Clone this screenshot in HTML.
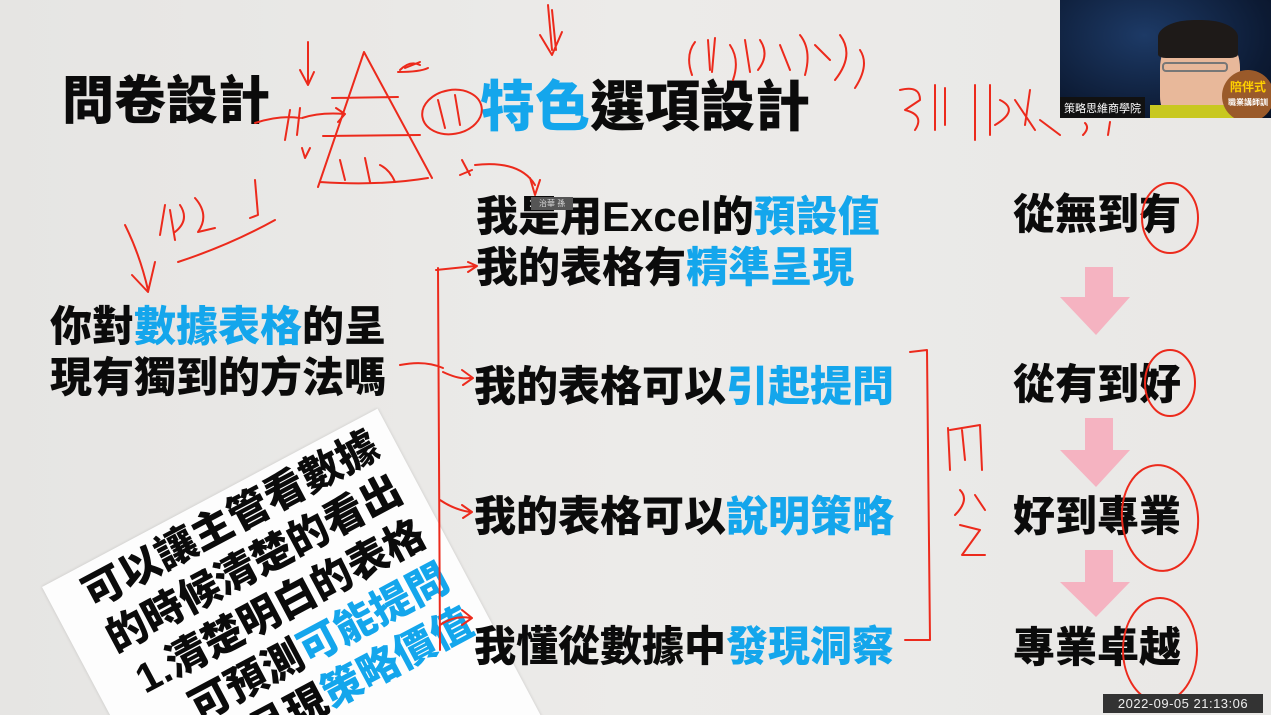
<!DOCTYPE html>
<html><head><meta charset="utf-8"><style>
html,body{margin:0;padding:0;width:1271px;height:715px;overflow:hidden}
body{position:relative;background:linear-gradient(90deg,#e6e5e3,#ecebe9 50%,#e9e8e6);font-family:"Liberation Sans","Noto Sans CJK TC",sans-serif;font-weight:bold}
.t{position:absolute;white-space:nowrap;color:#0b0b0b;font-weight:900;line-height:1;z-index:3}
.b{color:#14a6ec}
.card{position:absolute;left:42px;top:587px;width:380px;height:400px;background:#fdfdfd;transform:rotate(-28deg);transform-origin:0 0;box-shadow:0 0 3px rgba(0,0,0,.15);z-index:2}
.card div{font-size:41px;line-height:50px;font-weight:900;color:#0b0b0b;text-align:right;width:362px;white-space:nowrap}
.cam{position:absolute;left:1060px;top:0;width:211px;height:118px;background:radial-gradient(ellipse at 40% 30%,#1d3a66,#0c1a33 70%,#081225);overflow:hidden;z-index:5}
svg{z-index:4}
</style></head><body>
<div class="t" style="left:62px;top:76px;font-size:52px">問卷設計</div>
<div class="t" style="left:480px;top:80px;font-size:55px"><span class="b">特色</span>選項設計</div>
<div class="t" style="left:50px;top:306px;font-size:42px">你對<span class="b">數據表格</span>的呈</div>
<div class="t" style="left:50px;top:357px;font-size:42px">現有獨到的方法嗎</div>
<div class="t" style="left:476px;top:196px;font-size:42px">我是用Excel的<span class="b">預設值</span></div>
<div class="t" style="left:476px;top:247px;font-size:42px">我的表格有<span class="b">精準呈現</span></div>
<div class="t" style="left:474px;top:366px;font-size:42px">我的表格可以<span class="b">引起提問</span></div>
<div class="t" style="left:474px;top:496px;font-size:42px">我的表格可以<span class="b">說明策略</span></div>
<div class="t" style="left:474px;top:626px;font-size:42px">我懂從數據中<span class="b">發現洞察</span></div>
<div class="t" style="left:1013px;top:194px;font-size:42px">從無到有</div>
<div class="t" style="left:1013px;top:364px;font-size:42px">從有到好</div>
<div class="t" style="left:1013px;top:496px;font-size:42px">好到專業</div>
<div class="t" style="left:1013px;top:627px;font-size:42px">專業卓越</div>
<svg style="position:absolute;left:0;top:0" width="1271" height="715">
<g fill="#f5b3c1">
<polygon points="1085,267 1113,267 1113,297 1130,297 1096,335 1060,297 1085,297"/>
<polygon points="1085,418 1113,418 1113,450 1130,450 1096,487 1060,450 1085,450"/>
<polygon points="1085,550 1113,550 1113,582 1130,582 1096,617 1060,582 1085,582"/>
</g>
</svg>
<div class="card">
<div style="margin-top:4px">可以讓主管看數據</div>
<div>的時候清楚的看出</div>
<div>1.清楚明白的表格</div>
<div>可預測<span class="b">可能提問</span></div>
<div>呈現<span class="b">策略價值</span></div>
</div>
<svg style="position:absolute;left:0;top:0" width="1271" height="715" fill="none" stroke="#ec2a1c" stroke-width="2" stroke-linecap="round" stroke-linejoin="round">
<path d="M364,52 L318,187 M364,52 L432,178 M332,98 L398,97 M323,136 L420,135 M320,182 Q380,186 428,178"/>
<path d="M308,42 L308,85 M300,70 L308,85 L314,72 M302,148 L305,158 L310,148"/>
<path d="M255,123 Q280,115 300,118 M290,110 L285,140 M300,108 L297,135 M302,118 Q320,112 345,114 L336,108 M345,114 L338,122"/>
<path d="M400,70 Q410,60 420,65 M405,68 L420,62 M398,72 Q420,72 428,68"/>
<ellipse cx="452" cy="112" rx="30" ry="22" transform="rotate(-10 452 112)"/>
<path d="M438,100 L445,128 M455,95 L460,125 M340,160 L345,180 M365,158 L370,182 M380,165 Q390,170 395,182 M462,160 L470,175 M472,170 L460,175"/>
<path d="M475,165 Q520,160 535,185 M530,178 L535,195 L540,180"/>
<path d="M548,5 L552,50 M540,35 L552,55 L562,32 M552,10 L556,50"/>
<path d="M695,42 Q685,55 692,75 M708,40 L710,70 M715,38 L712,72 M730,45 Q740,60 733,80 M745,40 L750,72 M760,40 Q770,55 758,70 M780,45 L790,70 M800,35 Q812,50 805,75 M815,45 L830,60 M840,35 Q855,55 835,80 M860,50 Q870,65 855,88"/>
<path d="M900,90 Q920,85 920,100 L905,110 Q925,115 915,130 M935,85 L935,130 M945,88 L945,125 M975,85 L975,140 M990,85 L990,135 M1000,100 Q1020,110 995,125 M1015,100 L1035,130 M1030,90 L1025,125 M1040,120 L1060,135"/>
<path d="M1085,123 Q1090,128 1083,135 M1110,122 L1108,135"/>
<path d="M165,205 L160,235 M170,210 L175,240 M180,205 Q190,220 175,232 M195,198 Q210,215 198,232 L215,228 M255,180 L258,215 L250,218 M178,262 Q230,245 275,220"/>
<path d="M125,225 Q140,255 148,290 M132,275 L148,292 L155,262"/>
<path d="M438,268 L440,650 M436,270 Q455,268 475,266 M468,262 L477,266 L468,272 M400,365 Q425,360 443,368 M443,372 Q460,380 470,378 M462,370 L473,378 L463,385 M440,500 Q455,510 470,512 M462,505 L472,512 L463,518 M440,625 Q455,615 470,618 M462,610 L472,618 L462,625"/>
<path d="M910,352 L927,350 L930,640 L905,640"/>
<path d="M948,428 L950,470 M950,430 L980,425 L982,470 M962,430 L965,460 M960,490 Q970,500 955,515 M975,495 L985,510 M960,525 L980,530 L962,555 L985,555"/>
<ellipse cx="1170" cy="218" rx="28" ry="35"/>
<ellipse cx="1170" cy="383" rx="25" ry="33"/>
<ellipse cx="1160" cy="518" rx="38" ry="53" transform="rotate(-5 1160 518)"/>
<ellipse cx="1160" cy="650" rx="37" ry="52"/>
</svg>
<div class="cam">
<div style="position:absolute;left:100px;top:30px;width:80px;height:95px;background:#e8b89a;border-radius:40% 40% 30% 30%"></div>
<div style="position:absolute;left:98px;top:20px;width:80px;height:38px;background:#1e1a18;border-radius:45% 45% 10% 10%"></div>
<div style="position:absolute;left:102px;top:62px;width:66px;height:10px;border:2px solid #777;border-radius:4px;box-sizing:border-box"></div>
<div style="position:absolute;left:90px;top:105px;width:90px;height:20px;background:#c8c820"></div>
<div style="position:absolute;left:162px;top:70px;width:52px;height:52px;border-radius:50%;background:#9a5a2a;color:#ffd000;font-size:12px;line-height:14px;text-align:center;padding-top:10px;box-sizing:border-box">陪伴式<br><span style="font-size:8px;color:#fff">職業講師訓</span></div>
<div style="position:absolute;left:0;top:97px;background:#111;color:#fff;font-size:11px;font-weight:normal;padding:3px 4px">策略思維商學院</div>
</div>
<div style="position:absolute;left:531px;top:197px;background:#555;color:#ddd;font-size:8px;padding:1px 8px;font-weight:normal;z-index:6">治華 孫</div>
<div style="position:absolute;left:1103px;top:694px;width:160px;height:19px;background:#333;color:#eee;font-size:13px;line-height:19px;text-align:center;font-weight:normal;letter-spacing:.5px;z-index:6">2022-09-05 21:13:06</div>
</body></html>
